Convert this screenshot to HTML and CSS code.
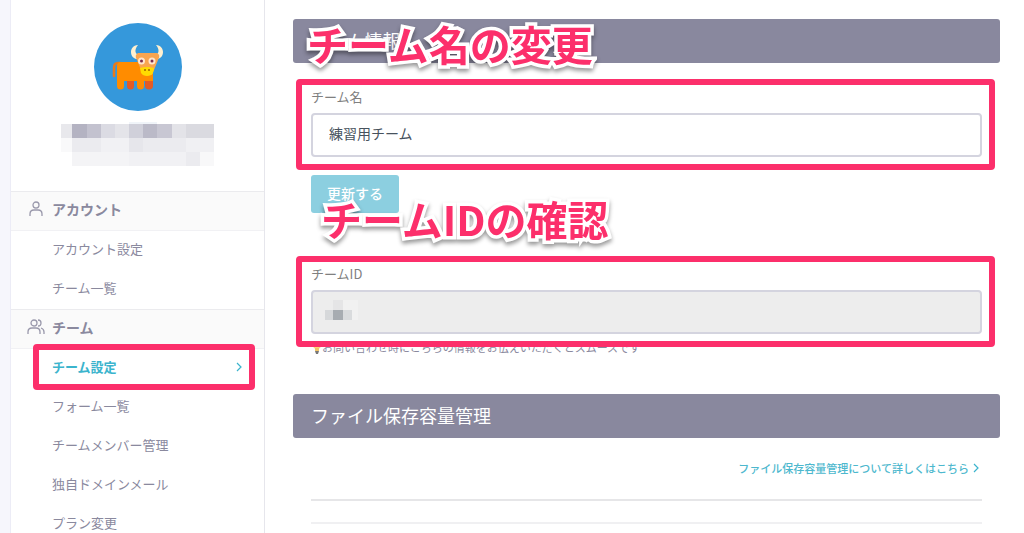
FILE: index.html
```html
<!DOCTYPE html>
<html lang="ja">
<head>
  <meta charset="UTF-8">
  <meta name="viewport" content="width=device-width, initial-scale=1.0">
  <title>チーム設定</title>
  <link rel="stylesheet" href="styles.css">
</head>
<body>
  <div class="layout">
    <aside class="sidebar">
      <div class="profile">
        <svg class="avatar" viewBox="0 0 88 88" role="img" aria-label="アバター">
          <circle cx="44" cy="44" r="44" fill="#3598db"/>
          <path d="M26 40h-2q-4 0-4 5v8" fill="none" stroke="#e67a1d" stroke-width="2.5" stroke-linecap="round"/>
          <path d="M33 55h7v8a3 3 0 0 1-7 0zM51 55h8v8a3.500 3 0 0 1-8 0z" fill="#e35b25"/>
          <path d="M27 39h32v19h-9v5a3 3 0 0 1-7 0v-5H30v5a3 3 0 0 1-7 0V43q0-4 4-4z" fill="#ff8c00"/>
          <path d="M44 22c-5 0-7 4-7 7 0 5 4 8 9 7l-1-4c-4-1-5-5-1-10zM62 22c5 0 7 4 7 7 0 5-4 8-9 7l1-4c4-1 5-5 1-10z" fill="#fff0d0"/>
          <path d="M44 30h19q4 2 1 7l-6 15h-9l-6-15q-3-5 1-7z" fill="#f9a550"/>
          <path d="M46 45q7-2 14 0l-1 5q-2 3-6 3t-6-3z" fill="#ffdc00"/>
          <circle cx="47.500" cy="38" r="3.500" fill="#ffe6cc"/>
          <circle cx="58" cy="38" r="3.500" fill="#ffe6cc"/>
          <circle cx="47.500" cy="38" r="1.500" fill="#7c2d50"/>
          <circle cx="58" cy="38" r="1.500" fill="#7c2d50"/>
          <circle cx="51" cy="47" r="1" fill="#a06000"/>
          <circle cx="55" cy="47" r="1" fill="#a06000"/>
        </svg>
        <!-- masked user name -->
        <svg class="masked-name" viewBox="0 0 153 44" shape-rendering="crispEdges" aria-hidden="true">
          <path fill="#f0f4f9" d="M68 0h28v2H68z"/>
          <path fill="#e8e8ec" d="M0 2h11v14H0z"/>
          <path fill="#b4b3c2" d="M11 2h15v14H11z"/>
          <path fill="#c3c2cf" d="M26 2h14v14H26z"/>
          <path fill="#dbdbe3" d="M40 2h14v14H40z"/>
          <path fill="#e4e4e9" d="M54 2h14v14H54z"/>
          <path fill="#d0d0da" d="M68 2h14v14H68z"/>
          <path fill="#bbbac8" d="M82 2h14v14H82z"/>
          <path fill="#c8c7d3" d="M96 2h15v14H96z"/>
          <path fill="#e3e3e8" d="M111 2h14v14h-14z"/>
          <path fill="#dadae0" d="M125 2h28v14h-28z"/>
          <path fill="#f9f9fa" d="M0 16h11v14H0z"/>
          <path fill="#ebebef" d="M11 16h29v14H11z"/>
          <path fill="#f1f1f4" d="M40 16h28v14H40z"/>
          <path fill="#e6e6eb" d="M68 16h14v14H68z"/>
          <path fill="#ebebef" d="M82 16h43v14H82z"/>
          <path fill="#f0f0f3" d="M125 16h28v14h-28z"/>
          <path fill="#f4f4f6" d="M11 30h57v14H11z"/>
          <path fill="#f1f1f4" d="M68 30h57v14H68z"/>
          <path fill="#ebebef" d="M125 30h14v14h-14z"/>
          <path fill="#f8f8f9" d="M139 30h14v14h-14z"/>
        </svg>
      </div>
      <nav>
        <h2 class="menu-title">
          <svg class="menu-icon" viewBox="0 0 18 16"><circle cx="9" cy="4" r="3"/><path d="M3 15v-2q0-4 4-4h4q4 0 4 4v2"/></svg>
          アカウント
        </h2>
        <ul class="menu">
          <li><a href="#">アカウント設定</a></li>
          <li><a href="#">チーム一覧</a></li>
        </ul>
        <h2 class="menu-title">
          <svg class="menu-icon" viewBox="0 0 18 16"><circle cx="7" cy="4" r="3"/><path d="M1 15v-2q0-4 4-4h4q4 0 4 4v2M11 1q3 0 3 3t-3 3M14 9q3 1 3 4v2"/></svg>
          チーム
        </h2>
        <ul class="menu">
          <li class="active">
            <a href="#">チーム設定<svg class="chevron" viewBox="0 0 6 10"><path d="M1 1l4 4-4 4"/></svg></a>
            <span class="frame"></span>
          </li>
          <li><a href="#">フォーム一覧</a></li>
          <li><a href="#">チームメンバー管理</a></li>
          <li><a href="#">独自ドメインメール</a></li>
          <li><a href="#">プラン変更</a></li>
        </ul>
      </nav>
    </aside>

    <main class="content">
      <section>
        <h1 class="section-title">チーム情報<span class="callout callout-name">チーム名の変更</span></h1>
        <form class="section-body">
          <div class="field">
            <label for="team-name">チーム名</label>
            <input id="team-name" type="text" value="練習用チーム">
            <span class="frame"></span>
          </div>
          <div class="actions">
            <button type="button">更新する</button>
            <span class="callout callout-id">チームIDの確認</span>
          </div>
          <div class="field">
            <label for="team-id">チームID</label>
            <div class="masked-input">
              <input id="team-id" type="text" readonly>
              <svg class="masked-id" viewBox="0 0 33 20" shape-rendering="crispEdges" aria-hidden="true">
                <path fill="#e5e5e6" d="M8 0h10v10H8z"/>
                <path fill="#f1f1f1" d="M18 0h15v20H18z"/>
                <path fill="#d6d8da" d="M0 10h8v10H0z"/>
                <path fill="#a7acb1" d="M8 10h10v10H8z"/>
                <path fill="#d9dbdd" d="M18 10h9v10h-9z"/>
              </svg>
            </div>
            <span class="frame"></span>
          </div>
          <p class="help">
            <svg class="bulb" viewBox="0 0 11 14"><circle cx="6" cy="5" r="4" fill="#fbd77b"/><path d="M4 8h4v3H4z" fill="#f3c568"/><path d="M4 11h4l-1 3H5z" fill="#777"/></svg>お問い合わせ時にこちらの情報をお伝えいただくとスムーズです
          </p>
        </form>
      </section>

      <section>
        <h1 class="section-title">ファイル保存容量管理</h1>
        <div class="section-body storage">
          <a class="more" href="#">ファイル保存容量管理について詳しくはこちら<svg class="chevron" viewBox="0 0 6 10"><path d="M1 1l4 4-4 4"/></svg></a>
          <hr>
          <hr class="light">
        </div>
      </section>
    </main>
  </div>
</body>
</html>
```

FILE: styles.css
```css
* {
  box-sizing: border-box;
}
body {
  margin: 0;
  font-family: "Noto Sans CJK JP", sans-serif;
  font-size: 13px;
  line-height: 20px;
  color: #8a899e;
  background: #f6f6fc;
}
h1, h2, p, ul {
  margin: 0;
  padding: 0;
}
a {
  color: inherit;
  text-decoration: none;
}
.layout {
  display: flex;
  height: 100vh;
  padding-left: 10px;
  overflow: hidden;
}

/* sidebar */
.sidebar {
  flex: 0 0 255px;
  background: #fff;
  border-left: 1px solid #ececf6;
  border-right: 1px solid #e6e6ec;
}
.profile {
  display: flex;
  flex-direction: column;
  align-items: center;
  gap: 11px;
  padding: 23px 0 25px;
}
.avatar {
  width: 88px;
  height: 88px;
}
.masked-name {
  width: 153px;
  height: 44px;
}
.menu-title {
  display: flex;
  align-items: center;
  gap: 7px;
  height: 40px;
  padding: 0 0 4px 16px;
  font-size: 14px;
  font-weight: 700;
  background: #fafafa;
  border-top: 1px solid #ebebee;
  border-bottom: 1px solid #f1f1f4;
}
.menu-icon {
  width: 18px;
  height: 16px;
  fill: none;
  stroke: #9a99ac;
  stroke-width: 1.3;
}
.menu {
  list-style: none;
}
.menu li {
  position: relative;
}
.menu a {
  display: flex;
  align-items: center;
  justify-content: space-between;
  height: 39px;
  padding: 0 22px 4px 41px;
}
.menu .active a {
  color: #3bb4cd;
  font-weight: 700;
}
.chevron {
  width: 6px;
  height: 10px;
  fill: none;
  stroke: #3bb4cd;
  stroke-width: 1.2;
}

/* main column */
.content {
  flex: 1;
  padding: 19px 24px 0 28px;
  background: #fff;
}
.section-title {
  position: relative;
  height: 44px;
  padding-left: 18px;
  font-size: 18px;
  font-weight: 400;
  line-height: 42px;
  color: #fff;
  background: #89889e;
  border-radius: 3px;
}
.section-body {
  padding: 24px 18px 36px;
}
.field {
  position: relative;
}
.field label {
  display: block;
  margin-bottom: 6px;
  color: #808080;
}
.field input {
  display: block;
  width: 100%;
  height: 44px;
  padding: 0 16px 4px;
  font: inherit;
  font-size: 14px;
  color: #47525d;
  background: #fff;
  border: 2px solid #d4d4df;
  border-radius: 4px;
}
.field input[readonly] {
  background: #ededed;
}
.masked-input {
  position: relative;
}
.masked-id {
  position: absolute;
  top: 10px;
  left: 14px;
  width: 33px;
  height: 20px;
}
.actions {
  position: relative;
  margin: 18px 0 51px;
}
.actions button {
  display: block;
  height: 38px;
  padding: 0 16px 2px;
  font: inherit;
  font-size: 14px;
  font-weight: 500;
  color: #fff;
  background: #8ccfe0;
  border: 0;
  border-radius: 3px;
}
.help {
  display: flex;
  align-items: center;
  margin-top: 3px;
  margin-bottom: 1px;
  font-size: 11px;
}
.bulb {
  width: 11px;
  height: 14px;
}
.storage {
  padding-top: 20px;
}
.more {
  display: flex;
  align-items: center;
  justify-content: flex-end;
  gap: 4px;
  padding-right: 3px;
  font-size: 11px;
  font-weight: 500;
  color: #4db8ce;
}
hr {
  height: 2px;
  margin: 21px 0;
  background: #e6e6e8;
  border: 0;
}
hr.light {
  background: #f0f0f2;
}

/* annotations over the page */
.frame {
  position: absolute;
  z-index: 1;
  inset: -8px -13px -13px -15px;
  border: 6px solid #fc2f6b;
  border-radius: 4px;
  pointer-events: none;
}
.menu .frame {
  inset: -5px 9px -2px 22px;
}
.callout {
  position: absolute;
  z-index: 2;
  font-size: 41px;
  font-weight: 700;
  line-height: 48px;
  white-space: nowrap;
  color: #fc2f6b;
  -webkit-text-stroke: 7px #fff;
  paint-order: stroke fill;
  stroke-linejoin: round;
  filter: drop-shadow(0 3px 2px rgba(0, 0, 0, 0.4));
}
.callout-name {
  top: 0;
  left: 14px;
}
.callout-id {
  top: 19px;
  left: 10px;
}
```
